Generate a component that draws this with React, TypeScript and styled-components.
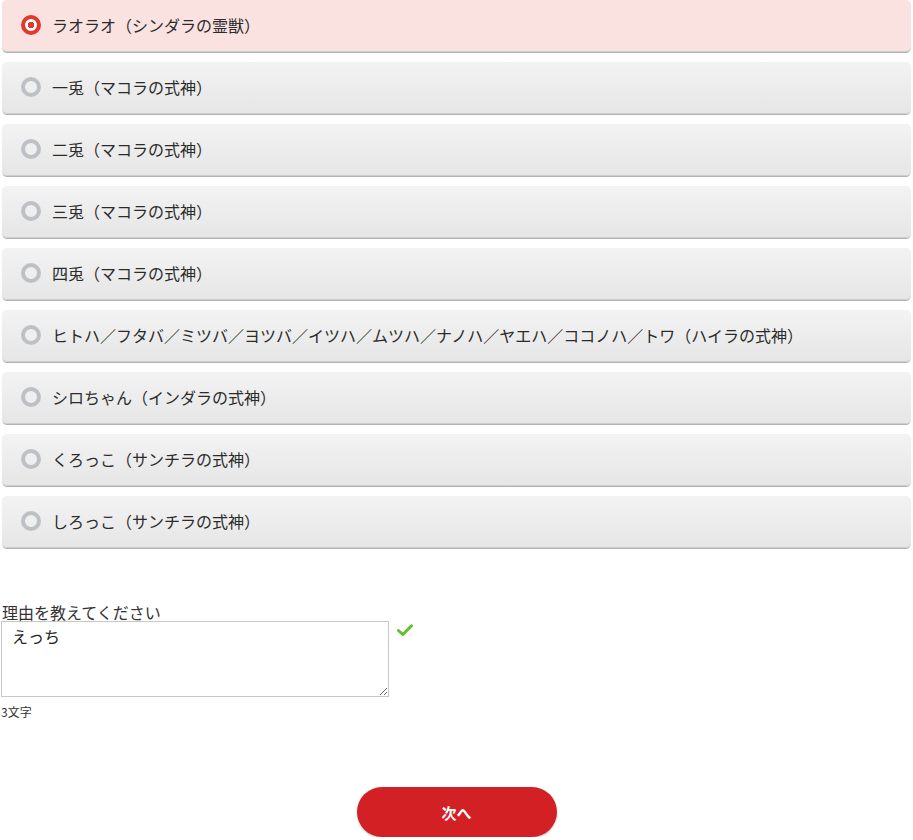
import React, { useState } from "react";
import styled, { createGlobalStyle } from "styled-components";

const GlobalStyle = createGlobalStyle`
  body {
    margin: 0;
    background: #fff;
    font-family: "Noto Sans CJK JP", "Noto Sans", sans-serif;
    color: #333;
  }
`;

const options = [
  "ラオラオ（シンダラの霊獣）",
  "一兎（マコラの式神）",
  "二兎（マコラの式神）",
  "三兎（マコラの式神）",
  "四兎（マコラの式神）",
  "ヒトハ／フタバ／ミツバ／ヨツバ／イツハ／ムツハ／ナノハ／ヤエハ／ココノハ／トワ（ハイラの式神）",
  "シロちゃん（インダラの式神）",
  "くろっこ（サンチラの式神）",
  "しろっこ（サンチラの式神）",
];

const App = () => {
  const [selected, setSelected] = useState(0);
  const [reason, setReason] = useState("えっち");

  return (
    <>
      <GlobalStyle />
      <StPage>
        <StOptionList>
          {options.map((label, i) => (
            <StOption key={label} $active={selected === i} onClick={() => setSelected(i)}>
              <StRadio $active={selected === i} />
              <span>{label}</span>
            </StOption>
          ))}
        </StOptionList>

        <StReason>
          <StLabel>理由を教えてください</StLabel>
          <StFieldRow>
            <StTextarea autoFocus value={reason} onChange={e => setReason(e.target.value)} />
            <StCheck viewBox="0 0 16 12">
              <path d="M1.5 6.5 L5.8 10.5 L14.5 1.8" fill="none" stroke="#5fbf2f" strokeWidth="3" strokeLinecap="round" strokeLinejoin="round" />
            </StCheck>
          </StFieldRow>
          <StCount>{reason.length}文字</StCount>
        </StReason>

        <StFooter>
          <StNextButton>次へ</StNextButton>
        </StFooter>
      </StPage>
    </>
  );
};

export default App;

const StPage = styled.div`
  width: 913px;
`;

const StOptionList = styled.div`
  display: flex;
  flex-direction: column;
  gap: 10px;
  padding: 0 2px;
`;

const StOption = styled.div<{ $active: boolean }>`
  box-sizing: border-box;
  height: 52px;
  display: flex;
  align-items: center;
  gap: 11px;
  padding: 0 0 2px 19px;
  border-radius: 5px;
  background: ${p => (p.$active ? "#fae2e1" : "linear-gradient(#f3f3f3, #e6e6e6)")};
  box-shadow: 0 1px 1px rgba(0, 0, 0, 0.15), 0 2px 0 -1px #cfcfcf;
  border-bottom: 1px solid #cdcdcd;
  font-size: 16px;
  font-weight: 400;
  color: #2b2b2b;
  cursor: pointer;
`;

const StRadio = styled.span<{ $active: boolean }>`
  box-sizing: border-box;
  width: 20px;
  height: 20px;
  border-radius: 50%;
  border: 4px solid ${p => (p.$active ? "#e03a2e" : "#bdc1c5")};
  background: ${p => (p.$active ? "radial-gradient(circle, #e03a2e 0 3px, #fff 3.5px)" : "#efefef")};
  flex-shrink: 0;
`;

const StReason = styled.div`
  margin-top: 55px;
  padding-left: 1px;
`;

const StLabel = styled.div`
  font-size: 16px;
  line-height: 18px;
  color: #333;
  padding-left: 1px;
`;

const StFieldRow = styled.div`
  display: flex;
  align-items: flex-start;
  gap: 8px;
`;

const StTextarea = styled.textarea`
  box-sizing: border-box;
  width: 388px;
  height: 76px;
  border: 1px solid #c8c8c8;
  padding: 2px 10px;
  font-family: "Noto Sans CJK JP", sans-serif;
  font-size: 16px;
  font-weight: 400;
  color: #222;
  resize: vertical;
  margin: 0;
  outline: none;
  caret-color: #000;
`;

const StCheck = styled.svg`
  width: 16px;
  height: 12px;
  margin-top: 3px;
`;

const StCount = styled.div`
  font-size: 12px;
  margin-top: 6px;
  color: #333;
`;

const StFooter = styled.div`
  display: flex;
  justify-content: center;
  margin-top: 67px;
`;

const StNextButton = styled.button`
  width: 200px;
  height: 50px;
  border: none;
  border-radius: 25px;
  background: #d32024;
  box-shadow: 0 1px 2px rgba(0, 0, 0, 0.25);
  color: #fff;
  font-family: "Noto Sans CJK JP", sans-serif;
  font-size: 15px;
  font-weight: 700;
  cursor: pointer;
`;
